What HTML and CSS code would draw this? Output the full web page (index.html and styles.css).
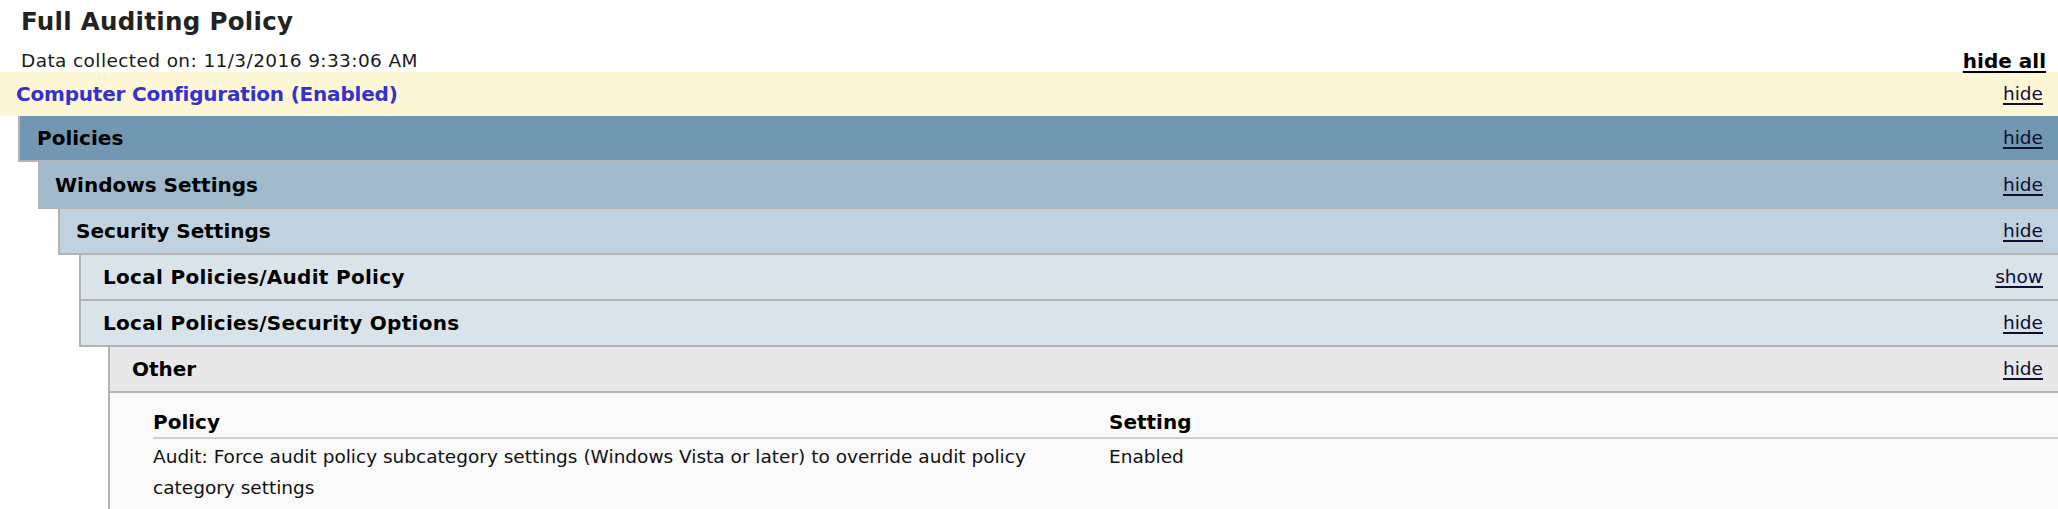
FILE: index.html
```html
<!DOCTYPE html>
<html>
<head>
<meta charset="utf-8">
<link rel="stylesheet" href="styles.css">
</head>
<body>
<div class="header">
  <div class="title">Full Auditing Policy</div>
  <div class="meta-row">
    <span class="collected">Data collected on: 11/3/2016 9:33:06 AM</span>
    <a class="hide-all">hide all</a>
  </div>
</div>
<div class="band band-0"><span class="label">Computer Configuration (Enabled)</span><a class="toggle">hide</a></div>
<div class="level level-1">
  <div class="band band-1"><span class="label">Policies</span><a class="toggle">hide</a></div>
  <div class="level level-2">
    <div class="band band-2"><span class="label">Windows Settings</span><a class="toggle">hide</a></div>
    <div class="level level-3">
      <div class="band band-3"><span class="label">Security Settings</span><a class="toggle">hide</a></div>
      <div class="level level-4">
        <div class="band band-4 first"><span class="label">Local Policies/Audit Policy</span><a class="toggle">show</a></div>
        <div class="band band-4"><span class="label">Local Policies/Security Options</span><a class="toggle">hide</a></div>
        <div class="level level-5">
          <div class="band band-5"><span class="label">Other</span><a class="toggle">hide</a></div>
          <div class="content">
            <table class="info">
              <colgroup><col class="col-policy"><col class="col-setting"></colgroup>
              <thead>
                <tr><th>Policy</th><th>Setting</th></tr>
              </thead>
              <tbody>
                <tr><td>Audit: Force audit policy subcategory settings (Windows Vista or later) to override audit policy category settings</td><td>Enabled</td></tr>
              </tbody>
            </table>
          </div>
        </div>
      </div>
    </div>
  </div>
</div>
</body>
</html>
```

FILE: styles.css
```css
html, body {
  margin: 0;
  padding: 0;
  background: #ffffff;
}
body {
  font-family: "DejaVu Sans", Verdana, sans-serif;
  font-size: 18.5px;
  color: #111111;
  overflow: hidden;
}
.header {
  padding: 4px 12px 0 21px;
}
.title {
  font-weight: bold;
  font-size: 24.5px;
  letter-spacing: 0.3px;
  line-height: 36px;
  color: #222222;
}
.meta-row {
  height: 32px;
  display: flex;
  justify-content: space-between;
  align-items: flex-end;
  line-height: 22px;
}
.collected {
  font-size: 18.5px;
  letter-spacing: 0.4px;
  color: #1a1a1a;
}
.hide-all {
  font-weight: bold;
  font-size: 20px;
  color: #000000;
  text-decoration: underline;
  text-decoration-thickness: 2px;
  text-underline-offset: 3px;
}
.band {
  display: flex;
  justify-content: space-between;
  align-items: center;
  font-weight: bold;
  font-size: 20px;
  color: #000000;
  padding-right: 15px;
  box-sizing: border-box;
  border-left: 2px solid #b3b3b3;
  border-bottom: 2px solid #b3b3b3;
  line-height: 24px;
}
.toggle {
  font-weight: normal;
  font-size: 18.5px;
  color: #0e0e36;
  text-decoration: underline;
  text-decoration-thickness: 2px;
  text-underline-offset: 3px;
}
.band-0 {
  background: #fef7d6;
  color: #3333cc;
  font-size: 20px;
  height: 44px;
  padding-left: 16px;
  border-left: none;
  border-bottom: none;
}
.band-0 .label {
  letter-spacing: -0.2px;
}
.level-1 { margin-left: 18px; }
.level-2 { margin-left: 20px; }
.level-3 { margin-left: 20px; }
.level-4 { margin-left: 21px; }
.level-5 { margin-left: 29px; }

.band-1 {
  background: #7197b3;
  height: 46px;
  padding-left: 17px;
}
.band-2 {
  background: #a0bacb;
  height: 47px;
  padding-left: 15px;
}
.band-3 {
  background: #c0d2de;
  height: 46px;
  padding-left: 16px;
}
.band-4 {
  background: #d9e3ea;
  height: 46px;
  padding-left: 22px;
}
.band-4 .label {
  letter-spacing: 0.3px;
}
.band-4.first {
  height: 46px;
}
.band-5 {
  background: #e8e8e8;
  height: 46px;
  padding-left: 22px;
}
.content {
  background: #f9f9f9;
  border-left: 2px solid #b3b3b3;
  padding: 14px 0 20px 43px;
}
.info {
  width: 100%;
  border-collapse: collapse;
  table-layout: fixed;
}
.info col.col-policy {
  width: 956px;
}
.info th {
  text-align: left;
  font-weight: bold;
  font-size: 20px;
  line-height: 30px;
  padding: 0;
  border-bottom: 2px solid #cfcfcf;
  color: #000000;
}
.info td {
  vertical-align: top;
  font-size: 18.5px;
  line-height: 31px;
  padding: 2px 0 0 0;
  color: #111111;
}
```
